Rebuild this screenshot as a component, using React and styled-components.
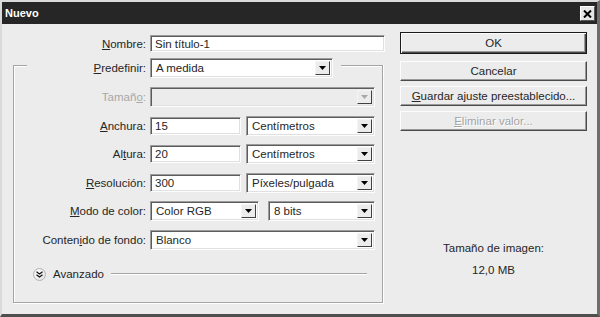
import React from 'react';
import styled, { createGlobalStyle, css } from 'styled-components';

const Global = createGlobalStyle`
  html, body { margin: 0; padding: 0; background: #ececec; }
  body { font-family: "Liberation Sans", Arial, sans-serif; font-size: 11.5px; color: #262626; }
  * { box-sizing: border-box; }
`;

const Window = styled.div`
  width: 600px;
  height: 317px;
  display: flex;
  flex-direction: column;
  background: #ececec;
  border-style: solid;
  border-width: 2px 3px 3px 2px;
  border-color: #dadada #6e6e6e #4e4e4e #dadada;
`;

const TitleBar = styled.div`
  height: 22px;
  flex: none;
  background: #262626;
  display: flex;
  align-items: center;
  justify-content: space-between;
  padding: 0 2px 0 3px;
`;

const Title = styled.span`
  color: #fff;
  font-weight: bold;
  font-size: 11px;
`;

const CloseBtn = styled.div`
  width: 15px;
  height: 15px;
  margin-top: 1px;
  background: #e6e6e6;
  border: 1px solid;
  border-color: #fff #555 #555 #fff;
  display: flex;
  align-items: center;
  justify-content: center;
`;

const Body = styled.div`
  flex: 1;
  display: flex;
  padding: 0 10px 0 11px;
`;

const LeftCol = styled.div`
  width: 372px;
  padding-top: 11px;
  display: flex;
  flex-direction: column;
`;

const NameRow = styled.div`
  display: grid;
  grid-template-columns: 133px 235px;
  column-gap: 4px;
  height: 17px;
  align-items: center;
`;

const Label = styled.span`
  text-align: right;
  white-space: nowrap;
  color: ${p => (p.$disabled ? '#a8a8a8' : '#262626')};
`;

const Key = styled.span`
  text-decoration: underline;
  text-underline-offset: 1px;
`;

const sunken = css`
  border: 1px solid;
  border-color: #9c9c9c #fdfdfd #fdfdfd #9c9c9c;
  box-shadow: inset 1px 1px 0 #5c5c5c, inset -1px -1px 0 #e0e0e0;
`;

const TextField = styled.div`
  ${sunken};
  height: ${p => p.$h || 17}px;
  width: ${p => (p.$w ? `${p.$w}px` : 'auto')};
  background: #fff;
  display: flex;
  align-items: center;
  padding: 0 4px;
  white-space: nowrap;
`;

const SelectBox = styled.div`
  ${sunken};
  height: 20px;
  width: ${p => (p.$w ? `${p.$w}px` : 'auto')};
  background: ${p => (p.$disabled ? '#ececec' : '#fff')};
  display: flex;
  align-items: stretch;
  padding: 2px;
`;

const SelectText = styled.span`
  flex: 1;
  display: flex;
  align-items: center;
  padding-left: 3px;
  white-space: nowrap;
  overflow: hidden;
`;

const DropBtn = styled.div`
  width: 15px;
  flex: none;
  background: #ececec;
  border: 1px solid;
  border-color: #f4f4f4 #404040 #404040 #f4f4f4;
  display: flex;
  align-items: center;
  justify-content: center;
`;

const Group = styled.div`
  margin-top: 6px;
  width: 370px;
  display: flex;
  flex-direction: column;
`;

const GroupHead = styled.div`
  display: flex;
  height: 20px;
  align-items: stretch;
`;

const CornerLeft = styled.div`
  width: 14px;
  height: 13px;
  align-self: flex-end;
  border-top: 1px solid #a4a4a4;
  border-left: 1px solid #a4a4a4;
  box-shadow: inset 1px 1px 0 #fff;
`;

const CornerRight = styled.div`
  flex: 1;
  margin-left: 8px;
  height: 13px;
  align-self: flex-end;
  border-top: 1px solid #a4a4a4;
  border-right: 1px solid #a4a4a4;
  box-shadow: inset 0 1px 0 #fff, 1px 0 0 #fff;
`;

const HeadLabel = styled.span`
  width: 119px;
  text-align: right;
  align-self: center;
  margin-right: 4px;
`;

const GroupBody = styled.div`
  border: 1px solid #a4a4a4;
  border-top: none;
  box-shadow: inset 1px 0 0 #fff, 1px 1px 0 #fff;
  padding: 9px 7px 21px 0;
`;

const Grid = styled.div`
  display: grid;
  grid-template-columns: 132px 225px;
  column-gap: 4px;
  row-gap: 8.5px;
  grid-auto-rows: 20px;
  align-items: center;
`;

const Pair = styled.div`
  display: flex;
  gap: ${p => p.$gap}px;
  align-items: center;
`;

const AdvRow = styled.div`
  margin-top: 18px;
  display: flex;
  align-items: center;
  height: 13px;
  padding-left: 19px;
  padding-right: 8px;
`;

const AdvIcon = styled.div`
  width: 13px;
  height: 13px;
  border-radius: 50%;
  border: 1px solid #b4b4b4;
  background: radial-gradient(circle at 40% 35%, #ffffff, #dedede);
  display: flex;
  align-items: center;
  justify-content: center;
`;

const AdvText = styled.span`
  margin-left: 7px;
  font-size: 11.5px;
`;

const AdvLine = styled.div`
  flex: 1;
  margin-left: 7px;
  height: 2px;
  border-top: 1px solid #a4a4a4;
  border-bottom: 1px solid #fff;
`;

const RightCol = styled.div`
  width: 187px;
  margin-left: 15px;
  padding-top: 8px;
  padding-bottom: 37px;
  display: flex;
  flex-direction: column;
`;

const Button = styled.div`
  height: ${p => (p.$default ? 22 : 20)}px;
  margin-top: ${p => p.$mt || 0}px;
  display: flex;
  align-items: center;
  justify-content: center;
  background: #ececec;
  white-space: nowrap;
  color: ${p => (p.$disabled ? '#a4a4a4' : '#262626')};
  text-shadow: ${p => (p.$disabled ? '1px 1px 0 #fff' : 'none')};
  border: 1px solid;
  border-color: ${p => (p.$default ? '#1a1a1a' : '#fdfdfd #4a4a4a #4a4a4a #fdfdfd')};
  box-shadow: ${p =>
    p.$default
      ? 'inset 1px 1px 0 #fdfdfd, inset -1px -1px 0 #4a4a4a, inset -2px -2px 0 #9a9a9a'
      : 'inset -1px -1px 0 #9a9a9a'};
`;

const Info = styled.div`
  margin-top: auto;
  display: flex;
  flex-direction: column;
  align-items: center;
  gap: 8px;
  line-height: 14px;
`;

const Arrow = ({ color = '#000' }) => (
  <svg width="7" height="4" viewBox="0 0 7 4">
    <polygon points="0,0 7,0 3.5,4" fill={color} />
  </svg>
);

const Select = ({ w, disabled, children }) => (
  <SelectBox $w={w} $disabled={disabled}>
    <SelectText>{children}</SelectText>
    <DropBtn>
      <Arrow color={disabled ? '#a8a8a8' : '#000'} />
    </DropBtn>
  </SelectBox>
);

export default function App() {
  return (
    <>
      <Global />
      <Window>
        <TitleBar>
          <Title>Nuevo</Title>
          <CloseBtn>
            <svg width="9" height="8" viewBox="0 0 9 8">
              <path d="M1 0.5 L8 7.5 M8 0.5 L1 7.5" stroke="#000" strokeWidth="2" />
            </svg>
          </CloseBtn>
        </TitleBar>
        <Body>
          <LeftCol>
            <NameRow>
              <Label><Key>N</Key>ombre:</Label>
              <TextField>Sin título-1</TextField>
            </NameRow>
            <Group>
              <GroupHead>
                <CornerLeft />
                <HeadLabel><Key>P</Key>redefinir:</HeadLabel>
                <Select w={183}>A medida</Select>
                <CornerRight />
              </GroupHead>
              <GroupBody>
                <Grid>
                  <Label $disabled>Tamañ<Key>o</Key>:</Label>
                  <Select disabled />

                  <Label><Key>A</Key>nchura:</Label>
                  <Pair $gap={5}>
                    <TextField $w={91} $h={18}>15</TextField>
                    <Select w={129}>Centímetros</Select>
                  </Pair>

                  <Label>Al<Key>t</Key>ura:</Label>
                  <Pair $gap={5}>
                    <TextField $w={91} $h={18}>20</TextField>
                    <Select w={129}>Centímetros</Select>
                  </Pair>

                  <Label><Key>R</Key>esolución:</Label>
                  <Pair $gap={5}>
                    <TextField $w={91} $h={18}>300</TextField>
                    <Select w={129}>Píxeles/pulgada</Select>
                  </Pair>

                  <Label><Key>M</Key>odo de color:</Label>
                  <Pair $gap={9}>
                    <Select w={109}>Color RGB</Select>
                    <Select w={107}>8 bits</Select>
                  </Pair>

                  <Label>Conten<Key>i</Key>do de fondo:</Label>
                  <Select>Blanco</Select>
                </Grid>
                <AdvRow>
                  <AdvIcon>
                    <svg width="7" height="7" viewBox="0 0 7 7">
                      <path d="M0.5 0.8 L3.5 3 L6.5 0.8 M0.5 3.8 L3.5 6 L6.5 3.8" stroke="#111" strokeWidth="1.3" fill="none" />
                    </svg>
                  </AdvIcon>
                  <AdvText>Avanzado</AdvText>
                  <AdvLine />
                </AdvRow>
              </GroupBody>
            </Group>
          </LeftCol>
          <RightCol>
            <Button $default>OK</Button>
            <Button $mt={7}>Cancelar</Button>
            <Button $mt={5}><Key>G</Key>uardar ajuste preestablecido...</Button>
            <Button $mt={5} $disabled><Key>E</Key>liminar valor...</Button>
            <Info>
              <span>Tamaño de imagen:</span>
              <span>12,0 MB</span>
            </Info>
          </RightCol>
        </Body>
      </Window>
    </>
  );
}
